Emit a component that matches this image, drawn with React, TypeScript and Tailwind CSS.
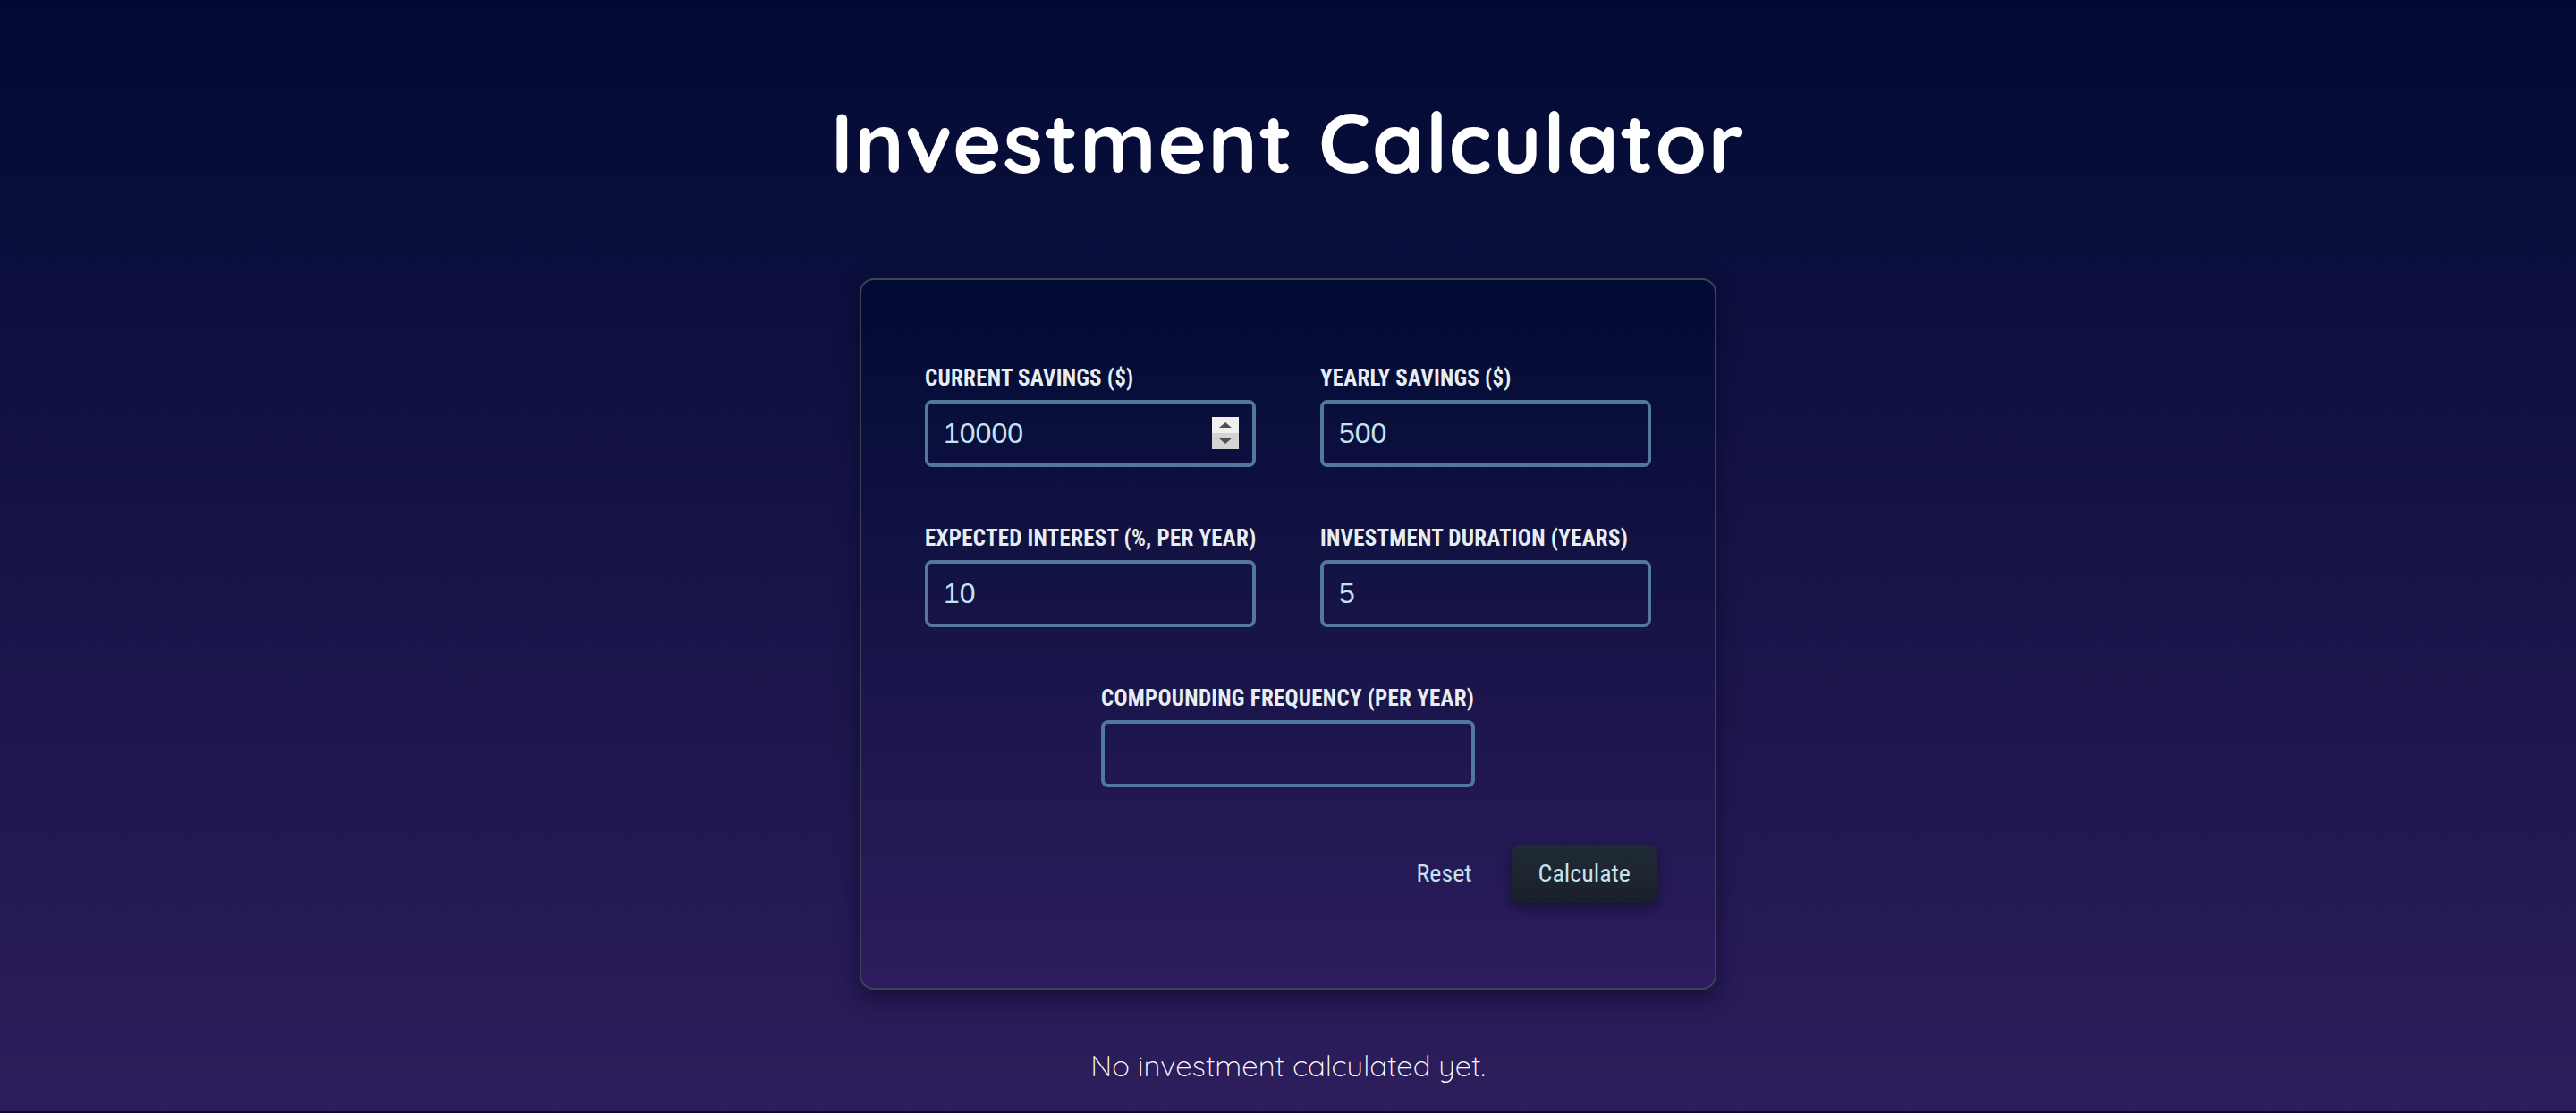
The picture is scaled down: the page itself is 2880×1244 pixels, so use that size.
import { useState } from "react";

const labelCls =
    "block h-[30px] whitespace-nowrap text-[25px] leading-[30px] font-bold uppercase tracking-[0.01em] text-[#e6eef0] font-['Roboto_Condensed','Liberation_Sans_Narrow','DejaVu_Sans_Condensed',sans-serif]";
const inputCls =
    "w-full h-[75px] rounded-[8px] border-[4px] border-[#52789b] bg-transparent pl-[17px] pr-[12px] text-[32px] text-[#c3e4ee] outline-none font-['Liberation_Sans',Arial,sans-serif] [appearance:textfield] [&::-webkit-inner-spin-button]:appearance-none [&::-webkit-outer-spin-button]:appearance-none";

function Field({ label, value, onChange, spinner }: { label: string; value: string; onChange: (v: string) => void; spinner?: boolean }) {
    return (
        <div className="flex flex-col gap-[9px]">
            <label className={labelCls}>{label}</label>
            <div className="relative">
                <input type="number" value={value} onChange={(e) => onChange(e.target.value)} className={inputCls} />
                {spinner && (
                    <div className="absolute right-[19px] top-[19px] flex h-[36px] w-[30px] flex-col">
                        <div className="flex flex-1 items-center justify-center bg-[#f0f0f0]">
                            <div className="h-0 w-0 border-x-[7px] border-b-[6px] border-x-transparent border-b-[#505050]" />
                        </div>
                        <div className="flex flex-1 items-center justify-center bg-[#d3d3d3]">
                            <div className="h-0 w-0 border-x-[7px] border-t-[6px] border-x-transparent border-t-[#505050]" />
                        </div>
                    </div>
                )}
            </div>
        </div>
    );
}

export default function App() {
    const [initial, setInitial] = useState("10000");
    const [yearly, setYearly] = useState("500");
    const [interest, setInterest] = useState("10");
    const [duration, setDuration] = useState("5");
    const [frequency, setFrequency] = useState("");

    const reset = () => {
        setInitial("");
        setYearly("");
        setInterest("");
        setDuration("");
        setFrequency("");
    };

    return (
        <div className="min-h-screen bg-gradient-to-b from-[#020a33] to-[#2d1d5c] border-b-2 border-[#0a0a36] flex flex-col items-center">
            <h1 className="mt-[98px] text-[93px] leading-[120px] font-bold tracking-[0.015em] text-white font-['Quicksand',Lato,sans-serif]">
                Investment Calculator
            </h1>

            <form
                onSubmit={(e) => e.preventDefault()}
                className="mt-[93px] w-[958px] rounded-[16px] border-2 border-[#3a4558] bg-gradient-to-b from-[#020b33] to-[#2d1c5e] px-[71px] pt-[95px] pb-[95px] shadow-[0_10px_24px_rgba(10,5,30,0.55)]"
            >
                <div className="grid grid-cols-2 gap-x-[72px] gap-y-[65px]">
                    <Field label="Current Savings ($)" value={initial} onChange={setInitial} spinner />
                    <Field label="Yearly Savings ($)" value={yearly} onChange={setYearly} />
                    <Field label="Expected Interest (%, per year)" value={interest} onChange={setInterest} />
                    <Field label="Investment Duration (years)" value={duration} onChange={setDuration} />
                    <div className="col-span-2 flex justify-center">
                        <div className="w-[418px]">
                            <Field label="Compounding Frequency (per year)" value={frequency} onChange={setFrequency} />
                        </div>
                    </div>
                </div>

                <div className="mt-[65px] mr-[-7px] flex items-center justify-end gap-[44px] font-['Roboto_Condensed','Liberation_Sans_Narrow',sans-serif] text-[28px]">
                    <button type="button" onClick={reset} className="text-[#c3e4ee]">
                        Reset
                    </button>
                    <button
                        type="submit"
                        className="h-[64px] rounded-[8px] bg-gradient-to-b from-[#1f2a36] to-[#1a202b] px-[30px] text-[#c3e4ee] shadow-[0_6px_14px_rgba(10,5,30,0.5)]"
                    >
                        Calculate
                    </button>
                </div>
            </form>

            <p className="mt-[60px] text-[33px] font-light text-white font-['Quicksand',Lato,sans-serif]">
                No investment calculated yet.
            </p>
        </div>
    );
}
